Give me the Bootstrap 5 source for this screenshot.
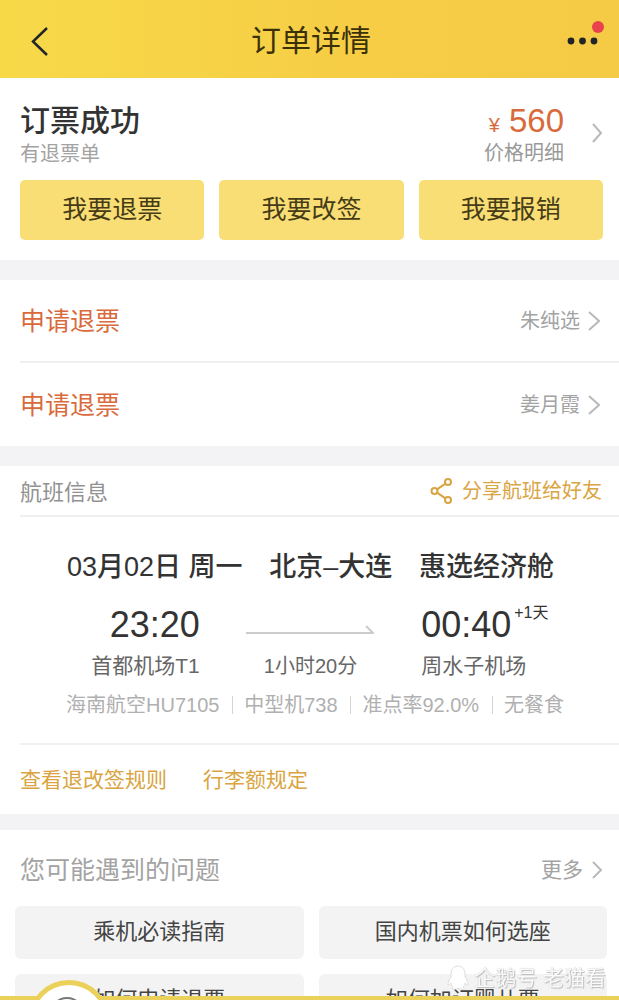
<!DOCTYPE html>
<html lang="zh-CN">
<head>
<meta charset="utf-8">
<meta name="viewport" content="width=device-width, initial-scale=1">
<title>订单详情</title>
<link href="https://cdn.jsdelivr.net/npm/bootstrap@5.3.0/dist/css/bootstrap.min.css" rel="stylesheet">
<style>
  html { scrollbar-width: none; }
  body { font-family: "Liberation Sans", "Noto Sans CJK SC", sans-serif; font-size: 20px; line-height: 30px; color: #333; background: #f3f3f6; }
  a { text-decoration: none; color: inherit; }
  button { color: inherit; }
  .topbar { height: 78px; padding: 4px 15px 0 24px; background: linear-gradient(90deg, #f7d948, #f6cd45 60%, #f5ca45); color: #3b3108; }
  .topbar h1 { font-size: 30px; line-height: 40px; font-weight: 400; }
  .topbar button { height: 40px; }
  .back { width: 34px; }
  .more { width: 40px; }
  .alert-dot { top: 0; right: 0; width: 12px; height: 12px; background: #e8434a; }
  .panel { background: #fff; margin-bottom: 20px; }
  .summary { padding: 22px 16px 20px 20px; }
  .medium { font-weight: 500; }
  .status-title { font-size: 30px; line-height: 42px; }
  .soft { color: #a3a3a3; }
  .dim { color: #999; }
  .tiny-line { line-height: 24px; }
  .price { color: #d96a3c; font-size: 33px; line-height: 40px; }
  .price small { font-size: 20px; line-height: 1; }
  .price-link { gap: 27px; }
  .actions { gap: 15px; margin-top: 14px; }
  .btn-act { height: 60px; background: #f8de74; color: #463b17; font-size: 25px; border: 0; border-radius: 5px; }
  .btn-act:hover { background: #f5d658; }
  .chev { width: 12px; height: 22px; fill: none; stroke: #b9b9b9; stroke-width: 2; }
  .ruled { margin-left: 20px; border-bottom: 2px solid #f0f0f1; }
  .refund { height: 83px; padding-right: 19px; margin-left: 20px; }
  .refund strong { font-size: 25px; font-weight: 400; color: #d96a3c; }
  .info-head { height: 51px; padding-right: 17px; }
  .info-head h2 { font-size: 22px; line-height: 30px; font-weight: 400; color: #929292; }
  .gold { color: #d9a441; }
  .flight { padding: 30px 0 23px; }
  .inset { padding: 0 65px 0 67px; }
  .route { font-size: 27px; line-height: 40px; }
  .legs { display: grid; grid-template-columns: 3fr 5fr 3fr; margin-top: 14px; }
  .clock { font-size: 36px; line-height: 48px; }
  .nextday { position: absolute; top: -3px; left: 100%; font-size: 16px; line-height: 30px; padding-left: 3px; white-space: nowrap; }
  .place { font-size: 21px; line-height: 34px; color: #666; white-space: nowrap; }
  .duration { font-size: 20px; }
  .facts { color: #b0b0b0; margin-top: 7px; padding: 0 55px 0 66px; white-space: nowrap; line-height: 30px; }
  .facts li + li::before { content: ""; display: inline-block; width: 1px; height: 18px; margin-right: 11px; background: #d4d4d4; vertical-align: -2px; }
  .rules { height: 69px; padding-left: 20px; gap: 36px; font-size: 21px; }
  .journey { margin-bottom: 16px; }
  .faq { padding: 20px 12px 30px 15px; }
  .faq-head { padding: 0 4px 0 5px; height: 40px; }
  .faq-head h2 { font-size: 25px; line-height: 40px; font-weight: 400; color: #a3a3a3; }
  .faq-head a { font-size: 21px; }
  .faq-grid { display: grid; grid-template-columns: 1fr 1fr; gap: 15px; margin-top: 16px; }
  .btn-faq { height: 53px; padding-top: 4px; border: 0; border-radius: 6px; background: #f3f3f3; color: #444; font-size: 22px; }
  .tabline { height: 4px; background: #ebd05a; }
  .tab-bubble { position: absolute; top: -16px; left: 28px; width: 82px; height: 82px; border: 5px solid #ebd05a; background: #fff; }
  .credit { position: fixed; right: 13px; bottom: 7px; font-size: 21px; color: #fafafa; text-shadow: 1px 1px 1px #bbb, 0 0 1px #bbb; }
</style>
</head>
<body>
<header class="topbar d-flex align-items-center justify-content-between">
  <button class="back btn p-0 border-0 text-start lh-1" aria-label="返回">
    <svg width="30" height="30" viewBox="0 0 30 30" fill="none" stroke="currentColor" stroke-width="2.500"><path d="M23 2 9 15.500 23 29"/></svg>
  </button>
  <h1 class="m-0">订单详情</h1>
  <button class="more btn p-0 border-0 position-relative lh-1" aria-label="更多操作">
    <svg width="40" height="40" viewBox="0 0 40 40" fill="currentColor"><circle cx="7" cy="20" r="3.400"/><circle cx="18.500" cy="20" r="3.400"/><circle cx="30" cy="20" r="3.400"/></svg>
    <span class="alert-dot position-absolute rounded-circle"></span>
  </button>
</header>

<main>
  <section class="panel summary">
    <div class="d-flex justify-content-between">
      <div>
        <h2 class="status-title medium m-0">订票成功</h2>
        <div class="soft tiny-line">有退票单</div>
      </div>
      <a href="#price" class="price-link d-flex align-items-center">
        <div class="text-end">
          <div class="price"><small>¥</small> 560</div>
          <div class="tiny-line dim">价格明细</div>
        </div>
        <svg class="chev" viewBox="0 0 12 22"><path d="M2 2 10 11 2 20"/></svg>
      </a>
    </div>
    <div class="actions d-flex">
      <button class="btn btn-act flex-fill">我要退票</button>
      <button class="btn btn-act flex-fill">我要改签</button>
      <button class="btn btn-act flex-fill">我要报销</button>
    </div>
  </section>

  <section class="panel">
    <a href="#r1" class="refund ruled d-flex align-items-center justify-content-between">
      <strong>申请退票</strong>
      <span class="soft d-flex align-items-center gap-2">朱纯选<svg class="chev" viewBox="0 0 12 22"><path d="M1 2 11 11 1 20"/></svg></span>
    </a>
    <a href="#r2" class="refund d-flex align-items-center justify-content-between">
      <strong>申请退票</strong>
      <span class="soft d-flex align-items-center gap-2">姜月霞<svg class="chev" viewBox="0 0 12 22"><path d="M1 2 11 11 1 20"/></svg></span>
    </a>
  </section>

  <section class="panel journey">
    <div class="info-head ruled d-flex align-items-center justify-content-between">
      <h2 class="m-0 pt-1">航班信息</h2>
      <a href="#share" class="gold d-flex align-items-center gap-2">
        <svg width="24" height="28" viewBox="0 0 24 28" fill="none" stroke="currentColor" stroke-width="2"><circle cx="4.500" cy="14" r="3"/><circle cx="18" cy="5" r="3"/><circle cx="18" cy="23" r="3"/><path d="M7 12.300 15.500 6.700M7 15.700 15.500 21.300"/></svg>
        分享航班给好友
      </a>
    </div>
    <div class="flight">
      <div class="route inset medium d-flex justify-content-between text-nowrap">
        <span>03月02日 周一</span><span>北京–大连</span><span>惠选经济舱</span>
      </div>
      <div class="legs inset">
        <div class="text-end">
          <div class="clock">23:20</div>
          <div class="place">首都机场T1</div>
        </div>
        <div class="d-flex flex-column align-items-center justify-content-between">
          <svg class="mt-4" width="128" height="12" viewBox="0 0 128 12" fill="none" stroke="#ccc" stroke-width="2"><path d="M0 8H127L120 1"/></svg>
          <div class="place duration">1小时20分</div>
        </div>
        <div>
          <div class="clock"><span class="position-relative d-inline-block">00:40<sup class="nextday">+1天</sup></span></div>
          <div class="place">周水子机场</div>
        </div>
      </div>
      <ul class="facts list-unstyled d-flex mb-0 justify-content-between">
        <li>海南航空HU7105</li><li>中型机738</li><li>准点率92.0%</li><li>无餐食</li>
      </ul>
    </div>
    <div class="ruled"></div>
    <div class="rules gold d-flex align-items-center">
      <a href="#refund-rules">查看退改签规则</a><a href="#baggage">行李额规定</a>
    </div>
  </section>

  <section class="panel faq mb-0">
    <div class="faq-head d-flex align-items-center justify-content-between">
      <h2 class="m-0">您可能遇到的问题</h2>
      <a href="#faq" class="soft d-flex align-items-center gap-2">更多<svg class="chev" viewBox="0 0 12 22"><path d="M2 3 10 11 2 19"/></svg></a>
    </div>
    <div class="faq-grid">
      <button class="btn btn-faq">乘机必读指南</button>
      <button class="btn btn-faq">国内机票如何选座</button>
      <button class="btn btn-faq">如何申请退票</button>
      <button class="btn btn-faq">如何加订婴儿票</button>
    </div>
  </section>
</main>

<nav class="tabline fixed-bottom">
  <a href="#service" class="tab-bubble rounded-circle d-flex justify-content-center" aria-label="客服">
    <svg class="mt-2" width="40" height="40" viewBox="0 0 40 40" fill="none" stroke="#777" stroke-width="2"><circle cx="18" cy="21" r="16"/></svg>
  </a>
</nav>
<div class="credit d-flex align-items-center gap-1">
  <svg width="24" height="26" viewBox="0 0 24 26" fill="#fff" stroke="#ddd"><path d="M12 1C7 1 5 5 5 9v3c-2 2-3 5-3 8 1 1 2-1 3-2 0 2 1 3 2 4-1 1-2 2 0 2h4l1-1 1 1h4c2 0 1-1 0-2 1-1 2-2 2-4 1 1 2 3 3 2 0-3-1-6-3-8V9c0-4-2-8-7-8z"/></svg>
  <span>企鹅号 老猫看</span>
</div>
<script src="https://cdn.jsdelivr.net/npm/bootstrap@5.3.0/dist/js/bootstrap.bundle.min.js"></script>
</body>
</html>
